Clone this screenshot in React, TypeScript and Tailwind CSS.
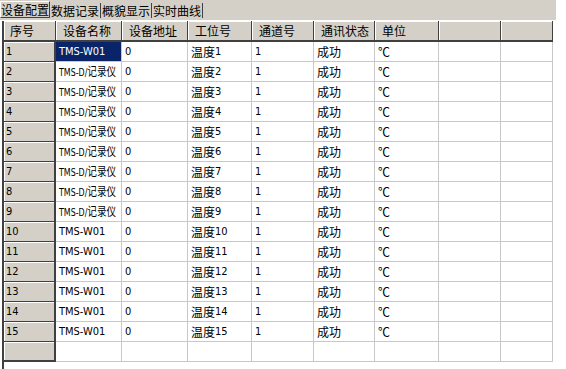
const columns = [
  { label: "序号", width: 52 },
  { label: "设备名称", width: 66 },
  { label: "设备地址", width: 66 },
  { label: "工位号", width: 64 },
  { label: "通道号", width: 62 },
  { label: "通讯状态", width: 61 },
  { label: "单位", width: 64 },
  { label: "", width: 62 },
  { label: "", width: 52 },
];

const tabs = ["设备配置", "数据记录", "概貌显示", "实时曲线"];

const rows = Array.from({ length: 15 }, (_, i) => ({
  no: String(i + 1),
  name: i < 1 || i >= 9 ? "TMS-W01" : "TMS-D/记录仪",
  addr: "0",
  station: `温度${i + 1}`,
  channel: "1",
  status: "成功",
  unit: "℃",
}));

const gridCols = "grid grid-cols-[52px_66px_66px_64px_62px_61px_64px_62px_52px]";

// latin runs are set smaller and narrower, like the old bitmap UI font
function Txt({ value }: { value: string }) {
  const parts = value.match(/[\x20-\x7e]+|[^\x20-\x7e]+/g) ?? [];
  return (
    <>
      {parts.map((p, i) =>
        /^[\x20-\x7e]+$/.test(p) ? (
          <span
            key={i}
            className="text-[11px] [font-family:'DejaVu_Sans_Condensed','Liberation_Sans_Narrow','Liberation_Sans',sans-serif]"
          >
            {p}
          </span>
        ) : (
          <span key={i}>{p}</span>
        )
      )}
    </>
  );
}

export default function App() {
  return (
    <div className="relative h-[369px] w-[566px] overflow-hidden bg-white text-[12px] leading-none text-black [font-family:'Noto_Sans_CJK_SC',sans-serif]">
      {/* tab strip */}
      <div className="flex h-[20px] w-[556px] items-start bg-[#d4d0c8] pt-[1px]">
        {tabs.map((tab, i) => (
          <div
            key={tab}
            className={`flex items-center whitespace-nowrap ${
              i === 0
                ? "h-[17px] border border-b-[#404040] border-l-white border-r-[#404040] border-t-white px-0"
                : "mt-[2px] h-[15px] border-r border-[#404040] px-[1px]"
            }`}
          >
            {tab}
          </div>
        ))}
      </div>

      {/* grid */}
      <div className="ml-[2px] mt-[1px] h-[348px] border-l-2 border-[#404040]">
        <div className={gridCols}>
          {columns.map((col, i) => (
            <div
              key={i}
              className={`flex h-[21px] items-center border-b-2 border-r border-[#404040] bg-[#d4d0c8] shadow-[inset_1px_1px_0_#ffffff] ${
                i === 0 ? "pl-[6px]" : "pl-[7px]"
              }`}
            >
              {col.label}
            </div>
          ))}
        </div>
        {rows.map((row) => (
          <div key={row.no} className={gridCols}>
            <div className="flex h-[20px] items-center border-b border-r-2 border-[#404040] bg-[#d4d0c8] pl-[2px] shadow-[inset_1px_1px_0_#ffffff]">
              <Txt value={row.no} />
            </div>
            {[row.name, row.addr, row.station, row.channel, row.status, row.unit, "", ""].map(
              (v, j) => (
                <div
                  key={j}
                  className={`flex h-[20px] items-center overflow-hidden whitespace-nowrap border-b border-r border-[#c8c8c8] pl-[3px] ${
                    row.no === "1" && j === 0 ? "bg-[#0a246a] text-white" : ""
                  }`}
                >
                  {v.length > 8 ? (
                    <span className="inline-block origin-left scale-x-[0.8]">
                      <Txt value={v} />
                    </span>
                  ) : (
                    <Txt value={v} />
                  )}
                </div>
              )
            )}
          </div>
        ))}
        <div className={gridCols}>
          <div className="h-[20px] border-b-2 border-r-2 border-[#404040] bg-[#d4d0c8] shadow-[inset_1px_1px_0_#ffffff]" />
          {Array.from({ length: 8 }, (_, j) => (
            <div key={j} className="h-[20px] border-b border-r border-[#c8c8c8]" />
          ))}
        </div>
      </div>
    </div>
  );
}
